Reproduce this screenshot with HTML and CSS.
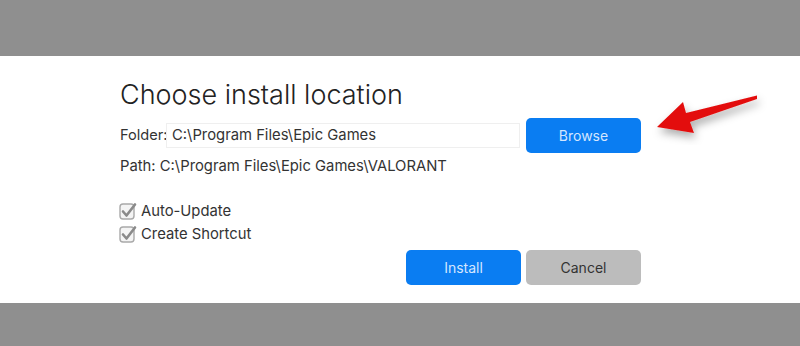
FILE: index.html
```html
<!DOCTYPE html>
<html>
<head>
<meta charset="utf-8">
<link rel="stylesheet" href="styles.css">
</head>
<body>
<div class="panel">
  <div class="content">
    <h1 class="title">Choose install location</h1>
    <div class="folder-row">
      <span class="label">Folder:</span>
      <div class="input">C:\Program Files\Epic Games</div>
      <button class="btn btn-blue browse">Browse</button>
    </div>
    <div class="path">Path: C:\Program Files\Epic Games\VALORANT</div>
    <div class="checks">
      <div class="check-row">
        <svg class="cb" width="20" height="20" viewBox="0 0 20 20">
          <rect x="1" y="3" width="14" height="15" rx="3" fill="#f4f4f4" stroke="#a9a9a9" stroke-width="1.4"/>
          <path d="M4 10.5 L7.5 14.5 L16 3.5" fill="none" stroke="#8a8a8a" stroke-width="2.6" stroke-linecap="round" stroke-linejoin="round"/>
        </svg>
        <span>Auto-Update</span>
      </div>
      <div class="check-row">
        <svg class="cb" width="20" height="20" viewBox="0 0 20 20">
          <rect x="1" y="3" width="14" height="15" rx="3" fill="#f4f4f4" stroke="#a9a9a9" stroke-width="1.4"/>
          <path d="M4 10.5 L7.5 14.5 L16 3.5" fill="none" stroke="#8a8a8a" stroke-width="2.6" stroke-linecap="round" stroke-linejoin="round"/>
        </svg>
        <span>Create Shortcut</span>
      </div>
    </div>
    <div class="actions">
      <button class="btn btn-blue">Install</button>
      <button class="btn btn-gray">Cancel</button>
    </div>
  </div>
</div>
<svg class="arrow" width="120" height="60" viewBox="650 85 120 60">
  <defs>
    <filter id="sh" x="-30%" y="-50%" width="160%" height="200%">
      <feDropShadow dx="2" dy="5" stdDeviation="4.5" flood-color="#000" flood-opacity="0.32"/>
    </filter>
  </defs>
  <polygon filter="url(#sh)" fill="#e3100f" points="657,127 683,102 686,113 757,95.5 757,99 690,122 694,133"/>
</svg>
</body>
</html>
```
FILE: styles.css
```css
html, body {
  margin: 0;
  padding: 0;
}
body {
  background: #8f8f8f;
  width: 800px;
  height: 346px;
  overflow: hidden;
  font-family: Inter, "Noto Sans", sans-serif;
  color: #333;
}
.panel {
  margin-top: 56px;
  height: 247px;
  background: #fff;
  box-sizing: border-box;
  padding-top: 22px;
}
.content {
  margin-left: 120px;
  width: 521px;
  display: flex;
  flex-direction: column;
}
.title {
  margin: 0;
  font-size: 27px;
  line-height: 34px;
  font-weight: 300;
  color: #222;
  letter-spacing: 0;
}
.folder-row {
  margin-top: 5px;
  display: flex;
  align-items: center;
  height: 36px;
}
.label {
  font-size: 14.6px;
  width: 46px;
  flex: none;
  white-space: nowrap;
}
.input {
  width: 354px;
  height: 25px;
  box-sizing: border-box;
  border: 1px solid #efefef;
  font-size: 14.8px;
  line-height: 23px;
  padding-left: 5px;
  color: #333;
}
.btn {
  width: 115px;
  height: 35px;
  border: none;
  border-radius: 5px;
  font-family: Inter, "Noto Sans", sans-serif;
  font-size: 14px;
  padding: 0;
}
.browse {
  margin-left: 6px;
}
.btn-blue {
  background: #0a7df2;
  color: #d4e6ff;
}
.btn-gray {
  background: #bcbcbc;
  color: #333;
}
.path {
  margin-top: 3px;
  font-size: 14.8px;
  line-height: 20px;
}
.checks {
  margin-top: 23px;
  display: flex;
  flex-direction: column;
}
.check-row {
  display: flex;
  align-items: center;
  height: 23px;
  font-size: 14.8px;
  gap: 2px;
}
.cb {
  flex: none;
  margin-left: -1px;
}
.actions {
  margin-top: 5px;
  display: flex;
  justify-content: flex-end;
  gap: 5px;
}
.arrow {
  position: absolute;
  left: 650px;
  top: 85px;
}
```
